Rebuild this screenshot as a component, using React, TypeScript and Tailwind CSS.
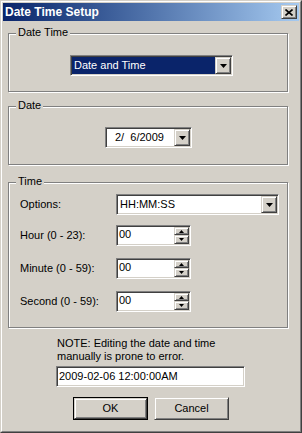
import React from "react";

const sunken =
  "border border-t-[#808080] border-l-[#808080] border-b-white border-r-white shadow-[inset_1px_1px_0_#404040,inset_-1px_-1px_0_#d4d0c8] p-[1px]";
const raised =
  "border border-t-[#d4d0c8] border-l-[#d4d0c8] border-b-[#404040] border-r-[#404040] shadow-[inset_1px_1px_0_#ffffff,inset_-1px_-1px_0_#808080]";

function DownArrow() {
  return (
    <svg width="7" height="4" viewBox="0 0 7 4">
      <path d="M0 0H7L3.5 4Z" fill="#000" />
    </svg>
  );
}

function DropButton() {
  return (
    <div className={`${raised} w-[16px] h-full flex items-center justify-center bg-[#d4d0c8]`}>
      <DownArrow />
    </div>
  );
}

function Group({
  label,
  className,
  children,
}: {
  label: string;
  className: string;
  children: React.ReactNode;
}) {
  return (
    <div
      className={`relative w-[280px] ml-[5px] border border-[#808080] shadow-[inset_1px_1px_0_#ffffff,1px_1px_0_#ffffff] ${className}`}
    >
      <span className="absolute left-[7px] top-[-8px] px-[2px] bg-[#d4d0c8] leading-[13px]">
        {label}
      </span>
      {children}
    </div>
  );
}

function Spin() {
  return (
    <div className={`${sunken} w-[75px] h-[21px] bg-white flex`}>
      <div className="flex-1 pl-[1px] leading-[15px] bg-white">00</div>
      <div className="w-[15px] flex flex-col">
        <div className={`${raised} h-[8px] flex items-center justify-center bg-[#d4d0c8]`}>
          <svg width="5" height="3" viewBox="0 0 5 3">
            <path d="M0 3H5L2.5 0Z" fill="#000" />
          </svg>
        </div>
        <div className={`${raised} h-[9px] flex items-center justify-center bg-[#d4d0c8]`}>
          <svg width="5" height="3" viewBox="0 0 5 3">
            <path d="M0 0H5L2.5 3Z" fill="#000" />
          </svg>
        </div>
      </div>
    </div>
  );
}

function Row({ label, children, mt }: { label: string; children: React.ReactNode; mt: string }) {
  return (
    <div className={`flex items-center ${mt}`}>
      <div className="w-[96px]">{label}</div>
      {children}
    </div>
  );
}

export default function App() {
  return (
    <div
      className="w-[302px] h-[433px] border border-t-[#d4d0c8] border-l-[#d4d0c8] border-b-[#404040] border-r-[#404040] bg-[#d4d0c8] text-[11px] text-black"
      style={{ fontFamily: '"Liberation Sans", Arial, sans-serif' }}
    >
      <div className="h-full border border-t-white border-l-white border-b-[#808080] border-r-[#808080] p-[1px] flex flex-col">
        {/* Title bar */}
        <div className="h-[18px] flex items-center justify-between bg-gradient-to-r from-[#0a246a] to-[#a6caf0] pl-[2px] pr-[2px]">
          <span className="text-white font-bold text-[12px] leading-[18px]">Date Time Setup</span>
          <div className={`${raised} w-[16px] h-[14px] bg-[#d4d0c8] flex items-center justify-center`}>
            <svg width="8" height="7" viewBox="0 0 8 7">
              <path d="M0.5 0.5L7.5 6.5M7.5 0.5L0.5 6.5" stroke="#000" strokeWidth="1.6" />
            </svg>
          </div>
        </div>

        {/* Date Time group */}
        <Group label="Date Time" className="mt-[12px] h-[59px] pt-[21px] pl-[61px]">
          <div className={`${sunken} w-[163px] h-[21px] bg-white flex`}>
            <div className="flex-1 bg-[#0a246a] text-white pl-[2px] leading-[17px]">Date and Time</div>
            <DropButton />
          </div>
        </Group>

        {/* Date group */}
        <Group label="Date" className="mt-[14px] h-[59px] pt-[20px] pl-[96px]">
          <div className={`${sunken} w-[87px] h-[21px] bg-white flex`}>
            <div className="flex-1 bg-white pl-[8px] leading-[17px] whitespace-pre">2/  6/2009</div>
            <DropButton />
          </div>
        </Group>

        {/* Time group */}
        <Group label="Time" className="mt-[17px] h-[146px] pt-[11px] pl-[11px]">
          <Row label="Options:" mt="">
            <div className={`${sunken} w-[163px] h-[21px] bg-white flex`}>
              <div className="flex-1 bg-white pl-[2px] leading-[17px]">HH:MM:SS</div>
              <DropButton />
            </div>
          </Row>
          <Row label="Hour (0 - 23):" mt="mt-[10px]">
            <Spin />
          </Row>
          <Row label="Minute (0 - 59):" mt="mt-[12px]">
            <Spin />
          </Row>
          <Row label="Second (0 - 59):" mt="mt-[12px]">
            <Spin />
          </Row>
        </Group>

        {/* Note */}
        <div className="mt-[9px] ml-[54px] leading-[13px]">
          <div>NOTE: Editing the date and time</div>
          <div>manually is prone to error.</div>
        </div>
        <div className={`${sunken} mt-[3px] ml-[53px] w-[189px] h-[21px] bg-white`}>
          <div className="pl-[1px] leading-[17px] bg-white">2009-02-06 12:00:00AM</div>
        </div>

        {/* Buttons */}
        <div className="flex mt-[10px] ml-[70px] gap-[6px]">
          <div className="w-[75px] h-[23px] border border-black">
            <div className={`${raised} w-full h-full bg-[#d4d0c8] flex items-center justify-center`}>OK</div>
          </div>
          <div className={`${raised} w-[75px] h-[23px] bg-[#d4d0c8] flex items-center justify-center`}>
            Cancel
          </div>
        </div>
      </div>
    </div>
  );
}
